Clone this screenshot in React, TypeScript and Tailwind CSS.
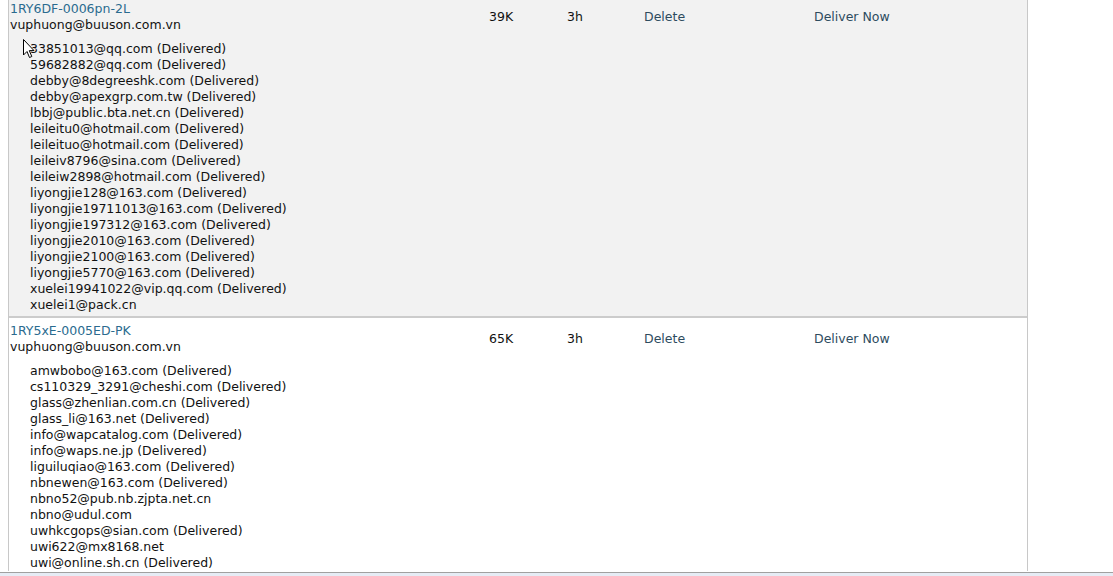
const rows = [
  {
    id: '1RY6DF-0006pn-2L',
    from: 'vuphuong@buuson.com.vn',
    size: '39K',
    age: '3h',
    bg: 'bg-[#f2f2f2]',
    first: true,
    recipients: [
      '33851013@qq.com (Delivered)',
      '59682882@qq.com (Delivered)',
      'debby@8degreeshk.com (Delivered)',
      'debby@apexgrp.com.tw (Delivered)',
      'lbbj@public.bta.net.cn (Delivered)',
      'leileitu0@hotmail.com (Delivered)',
      'leileituo@hotmail.com (Delivered)',
      'leileiv8796@sina.com (Delivered)',
      'leileiw2898@hotmail.com (Delivered)',
      'liyongjie128@163.com (Delivered)',
      'liyongjie19711013@163.com (Delivered)',
      'liyongjie197312@163.com (Delivered)',
      'liyongjie2010@163.com (Delivered)',
      'liyongjie2100@163.com (Delivered)',
      'liyongjie5770@163.com (Delivered)',
      'xuelei19941022@vip.qq.com (Delivered)',
      'xuelei1@pack.cn'
    ]
  },
  {
    id: '1RY5xE-0005ED-PK',
    from: 'vuphuong@buuson.com.vn',
    size: '65K',
    age: '3h',
    bg: 'bg-white',
    first: false,
    recipients: [
      'amwbobo@163.com (Delivered)',
      'cs110329_3291@cheshi.com (Delivered)',
      'glass@zhenlian.com.cn (Delivered)',
      'glass_li@163.net (Delivered)',
      'info@wapcatalog.com (Delivered)',
      'info@waps.ne.jp (Delivered)',
      'liguiluqiao@163.com (Delivered)',
      'nbnewen@163.com (Delivered)',
      'nbno52@pub.nb.zjpta.net.cn',
      'nbno@udul.com',
      'uwhkcgops@sian.com (Delivered)',
      'uwi622@mx8168.net',
      'uwi@online.sh.cn (Delivered)'
    ]
  }
]

function Cursor() {
  return (
    <svg className="absolute left-[23px] top-[39px]" width="12" height="20" viewBox="0 0 12 20">
      <path d="M0.5 0.5 L0.5 16 L4 12.5 L6.5 18.5 L8.8 17.5 L6.3 11.6 L11 11.6 Z" fill="#fff" stroke="#000" strokeWidth="1" />
    </svg>
  )
}

export default function App() {
  return (
    <div className="relative h-[576px] w-[1113px] overflow-hidden bg-white font-['DejaVu_Sans',sans-serif] text-[12.5px] leading-4 text-[#111]">
      <div className="ml-2 w-[1020px] border-x border-[#c8c8c8]">
        {rows.map((row) => (
          <div
            key={row.id}
            className={`flex ${row.bg} ${row.first ? 'pt-[1px] pb-[3px] border-b-2 border-[#cccccc]' : 'pt-[5px]'}`}
          >
            <div className="w-[480px] pl-[1px]">
              <div className="text-[#2a6b8f]">{row.id}</div>
              <div>{row.from}</div>
              <ul className="mt-2 pl-[20px]">
                {row.recipients.map((r) => (
                  <li key={r}>{r}</li>
                ))}
              </ul>
            </div>
            <div className="w-[78px] pt-2">{row.size}</div>
            <div className="w-[77px] pt-2">{row.age}</div>
            <div className="w-[170px] pt-2 text-[#2d4b5e]">Delete</div>
            <div className="pt-2 text-[#2d4b5e]">Deliver Now</div>
          </div>
        ))}
      </div>
      <div className="absolute bottom-0 left-0 h-[4px] w-full border-t border-[#a0a0a0] bg-[#e6ecf5]" />
      <Cursor />
    </div>
  )
}
